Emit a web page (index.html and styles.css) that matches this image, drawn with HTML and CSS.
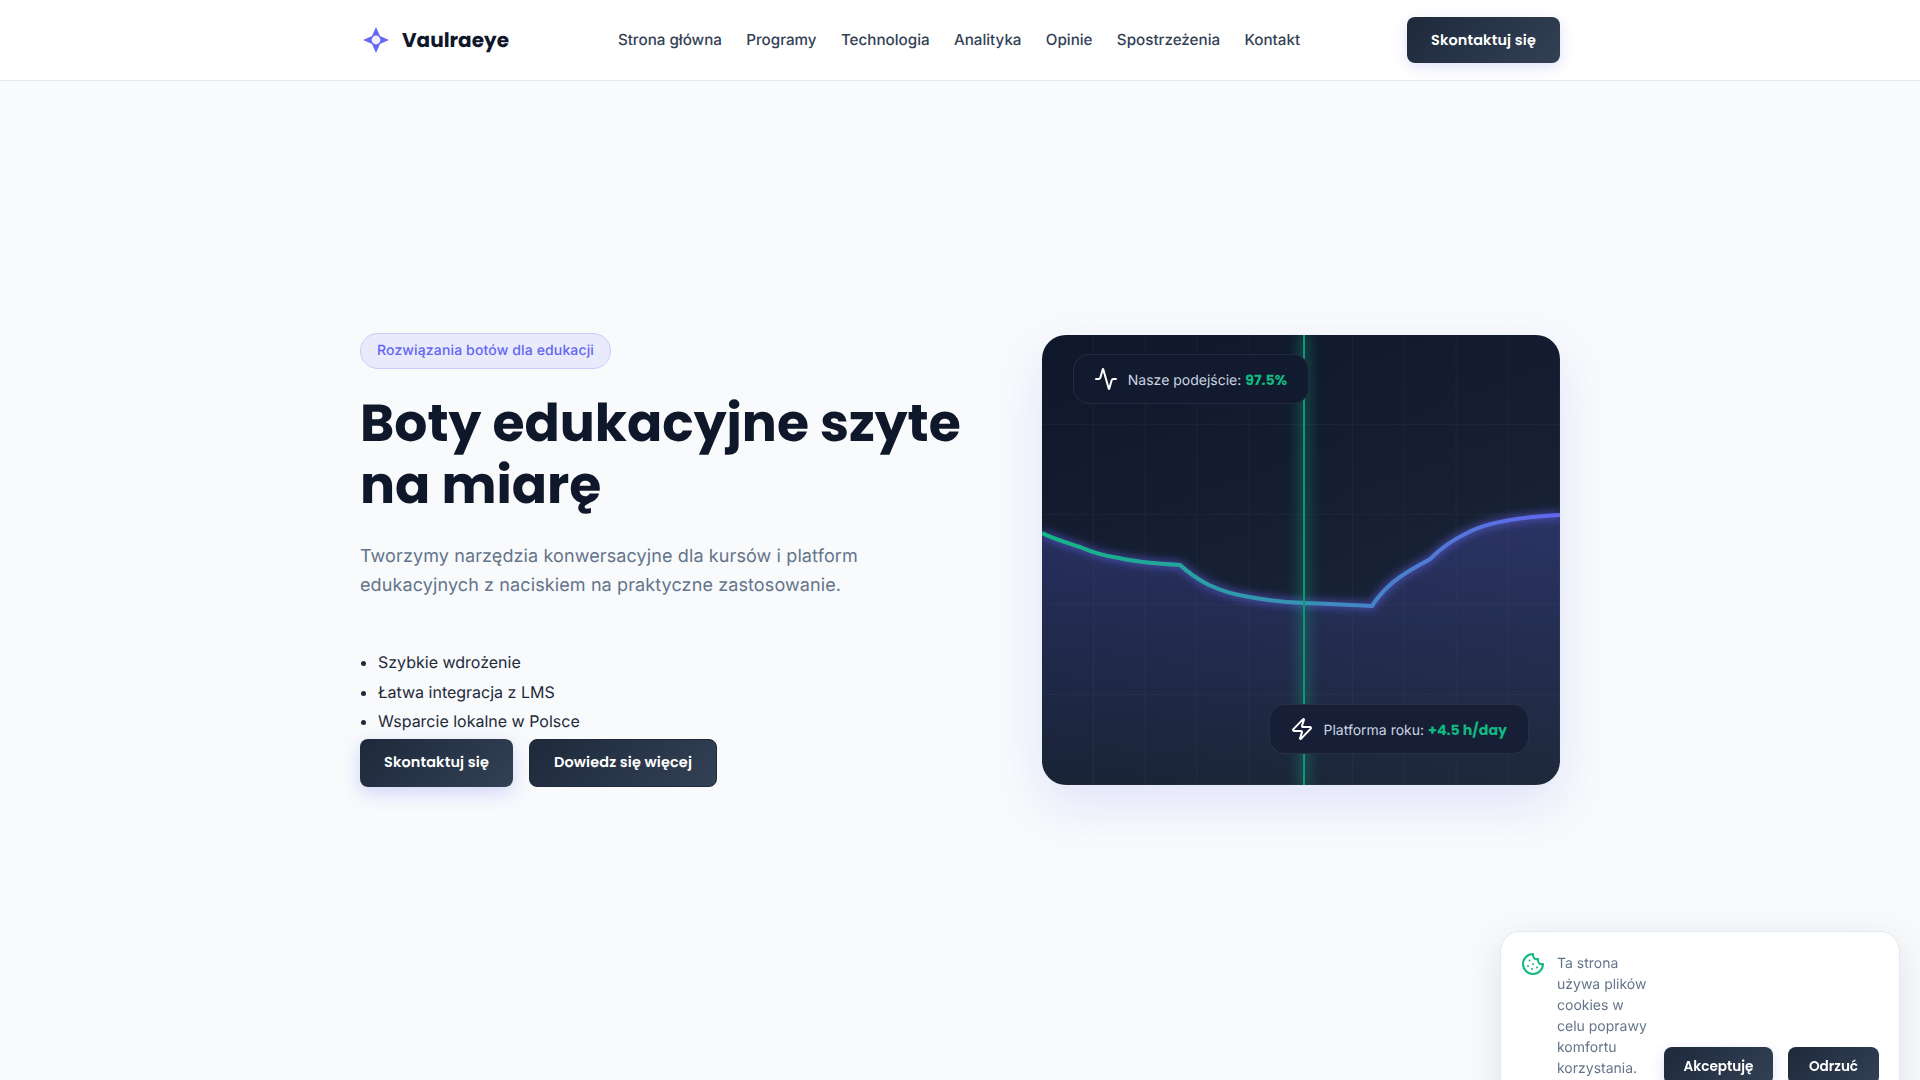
FILE: index.html
```html
<!DOCTYPE html>
<html lang="pl">
<head>
<meta charset="utf-8">
<title>Vaulraeye</title>
<link rel="stylesheet" href="styles.css">
</head>
<body>
<header class="site-header">
  <div class="container header-row">
    <a class="brand" href="#">
      <svg class="brand-mark" viewBox="0 0 28 28" aria-hidden="true">
        <path d="M14 1 L18 10 L27 14 L18 18 L14 27 L10 18 L1 14 L10 10 Z" fill="#6569f5"/>
        <circle cx="14" cy="14" r="4.4" fill="#eef0fb"/>
      </svg>
      <span class="brand-name">Vaulraeye</span>
    </a>
    <nav class="main-nav">
      <a href="#">Strona główna</a>
      <a href="#">Programy</a>
      <a href="#">Technologia</a>
      <a href="#">Analityka</a>
      <a href="#">Opinie</a>
      <a href="#">Spostrzeżenia</a>
      <a href="#">Kontakt</a>
    </nav>
    <a class="btn btn-header" href="#">Skontaktuj się</a>
  </div>
</header>

<main class="hero">
  <div class="container hero-grid">
    <section class="hero-copy">
      <span class="pill">Rozwiązania botów dla edukacji</span>
      <h1>Boty edukacyjne szyte na miarę</h1>
      <p class="lead">Tworzymy narzędzia konwersacyjne dla kursów i platform edukacyjnych z naciskiem na praktyczne zastosowanie.</p>
      <ul class="points">
        <li>Szybkie wdrożenie</li>
        <li>Łatwa integracja z LMS</li>
        <li>Wsparcie lokalne w Polsce</li>
      </ul>
      <div class="actions">
        <a class="btn btn-primary" href="#">Skontaktuj się</a>
        <a class="btn btn-secondary" href="#">Dowiedz się więcej</a>
      </div>
    </section>

    <figure class="viz">
      <svg class="viz-chart" viewBox="0 0 518 450" preserveAspectRatio="none" aria-hidden="true">
        <defs>
          <linearGradient id="areaFill" x1="0" y1="0" x2="0" y2="1">
            <stop offset="0" stop-color="#6366f1" stop-opacity="0.26"/>
            <stop offset="1" stop-color="#6366f1" stop-opacity="0"/>
          </linearGradient>
          <linearGradient id="lineStroke" x1="0" y1="0" x2="1" y2="0">
            <stop offset="0" stop-color="#10b981"/>
            <stop offset="1" stop-color="#6366f1"/>
          </linearGradient>
          <pattern id="gridCell" width="51.8" height="90" patternUnits="userSpaceOnUse">
            <path d="M51.8 0V90M0 90H51.8" fill="none" stroke="#ffffff" stroke-opacity="0.06" stroke-width="1"/>
          </pattern>
          <filter id="glow" x="-10%" y="-30%" width="120%" height="160%">
            <feGaussianBlur stdDeviation="4"/>
          </filter>
        </defs>
        <rect width="518" height="450" fill="url(#gridCell)"/>
        <path d="M0 198C12 204 26 208 38 212C52 218 62 221 77 223C95 227 120 229 138 230C150 241 157 245 167 250C180 256 190 259 202 261C222 265 240 267 262 268C285 269 310 270 330 271C338 258 346 252 350 248C360 239 375 231 388 224C398 214 412 204 425 198C445 187 480 182 518 180V450H0Z" fill="url(#areaFill)"/>
        <path d="M0 198C12 204 26 208 38 212C52 218 62 221 77 223C95 227 120 229 138 230C150 241 157 245 167 250C180 256 190 259 202 261C222 265 240 267 262 268C285 269 310 270 330 271C338 258 346 252 350 248C360 239 375 231 388 224C398 214 412 204 425 198C445 187 480 182 518 180" fill="none" stroke="#6366f1" stroke-opacity="0.8" stroke-width="5" filter="url(#glow)"/>
        <path d="M0 198C12 204 26 208 38 212C52 218 62 221 77 223C95 227 120 229 138 230C150 241 157 245 167 250C180 256 190 259 202 261C222 265 240 267 262 268C285 269 310 270 330 271C338 258 346 252 350 248C360 239 375 231 388 224C398 214 412 204 425 198C445 187 480 182 518 180" fill="none" stroke="url(#lineStroke)" stroke-width="4"/>
      </svg>
      <span class="scan-line"></span>
      <div class="stat stat-top">
        <svg class="stat-icon" viewBox="0 0 24 24" aria-hidden="true"><path d="M22 12h-2.48a2 2 0 0 0-1.93 1.46l-2.35 8.36a.25.25 0 0 1-.48 0L9.24 2.18a.25.25 0 0 0-.48 0l-2.35 8.36A2 2 0 0 1 4.49 12H2"/></svg>
        <span class="stat-label">Nasze podejście: <strong>97.5%</strong></span>
      </div>
      <div class="stat stat-bottom">
        <svg class="stat-icon" viewBox="0 0 24 24" aria-hidden="true"><path d="M4 14a1 1 0 0 1-.78-1.63l9.9-10.2a.5.5 0 0 1 .86.46l-1.92 6.02A1 1 0 0 0 13 10h7a1 1 0 0 1 .78 1.63l-9.9 10.2a.5.5 0 0 1-.86-.46l1.92-6.02A1 1 0 0 0 11 14z"/></svg>
        <span class="stat-label">Platforma roku: <strong>+4.5 h/day</strong></span>
      </div>
    </figure>
  </div>
</main>

<aside class="cookie">
  <svg class="cookie-icon" viewBox="0 0 24 24" aria-hidden="true">
    <path d="M12 2a10 10 0 1 0 10 10 4 4 0 0 1-5-5 4 4 0 0 1-5-5"/>
    <path d="M8.5 8.5v.01M16 15.5v.01M12 12v.01M11 17v.01M7 14v.01"/>
  </svg>
  <p class="cookie-text">Ta strona używa plików cookies w celu poprawy komfortu korzystania.</p>
  <div class="cookie-actions">
    <button class="btn btn-small btn-accept">Akceptuję</button>
    <button class="btn btn-small btn-reject">Odrzuć</button>
  </div>
</aside>
</body>
</html>
```
FILE: styles.css
```css
* { box-sizing: border-box; }
html, body { margin: 0; padding: 0; }
body {
  font-family: Inter, "Noto Sans", "Liberation Sans", sans-serif;
  background: #f8fafc;
  color: #0f172a;
  overflow-x: hidden;
  text-rendering: geometricPrecision;
}
a { text-decoration: none; color: inherit; }

.container { width: 1200px; margin: 0 auto; }

.site-header {
  height: 81px;
  background: #fff;
  border-bottom: 1px solid #e2e8f0;
}
.header-row {
  height: 80px;
  display: flex;
  align-items: center;
  justify-content: space-between;
}
.brand { display: flex; align-items: center; gap: 12px; margin-left: 2px; }
.brand-mark { width: 28px; height: 28px; display: block; }
.brand-name {
  font-family: Poppins, Inter, sans-serif;
  font-weight: 700;
  font-size: 20px;
  color: #0f172a;
}
.main-nav { display: flex; gap: 24.3px; padding-bottom: 2px; margin-left: 2px; }
.main-nav a { font-size: 15.2px; font-weight: 500; color: #334155; }

.btn {
  display: inline-flex;
  align-items: center;
  justify-content: center;
  padding-top: 2px;
  border-radius: 8px;
  font-family: Poppins, Inter, sans-serif;
  font-weight: 600;
  font-size: 14.4px;
  letter-spacing: .15px;
  color: #fff;
  background: linear-gradient(135deg, #1e293b, #334155);
  border: 0;
}
.btn-header { width: 153px; height: 46px; box-shadow: 0 4px 14px rgba(99, 102, 241, .2); }
.btn-primary { width: 153px; height: 48px; box-shadow: 0 6px 18px rgba(99, 102, 241, .25); }
.btn-secondary { width: 188px; height: 48px; border: 1px solid #1e293b; }

.hero {
  height: 958px;
  display: flex;
  align-items: center;
}
.hero-grid {
  display: grid;
  grid-template-columns: 1.2fr 1fr;
  gap: 60px;
  align-items: center;
}
.pill {
  display: block;
  width: fit-content;
  height: 36px;
  padding: 0 16px;
  line-height: 34px;
  border-radius: 18px;
  border: 1px solid #c9ccf8;
  background: #e9eafb;
  color: #6366f1;
  font-size: 14px;
  letter-spacing: .14px;
  font-weight: 500;
}
h1 {
  margin: 24px 0 25px;
  font-family: Poppins, Inter, sans-serif;
  font-weight: 700;
  font-size: 52px;
  line-height: 62.4px;
  color: #0f172a;
}
.lead {
  margin: 0 0 49.8px;
  max-width: 520px;
  font-size: 18px;
  letter-spacing: .11px;
  line-height: 28.8px;
  color: #64748b;
}
.points { margin: 0; padding: 0 0 0 18px; }
.points li { font-size: 16px; line-height: 24px; margin-bottom: 5.6px; color: #1e293b; }
.actions { display: flex; gap: 16px; }

.viz {
  position: relative;
  margin: 0;
  height: 450px;
  border-radius: 24px;
  overflow: hidden;
  background: linear-gradient(160deg, #0f172a, #1e293b);
  box-shadow: 0 20px 50px rgba(99, 102, 241, .15);
}
.viz-chart { display: block; width: 100%; height: 100%; }
.scan-line {
  position: absolute;
  top: 0;
  bottom: 0;
  left: 261px;
  width: 2px;
  background: #10977a;
  box-shadow: 0 0 14px 3px rgba(16, 185, 129, .45);
}
.stat {
  position: absolute;
  display: flex;
  align-items: center;
  gap: 10px;
  height: 50px;
  padding: 0 21px 0 20px;
  border-radius: 16px;
  border: 1px solid rgba(255, 255, 255, .08);
  background: #111a2e;
}
.stat-top { top: 19px; left: 31px; }
.stat-bottom { bottom: 31px; right: 31px; background: #171f36; }
.stat-icon {
  width: 24px;
  height: 24px;
  fill: none;
  stroke: #fff;
  stroke-width: 2;
  stroke-linecap: round;
  stroke-linejoin: round;
}
.stat-label { font-size: 14px; color: #cbd5e1; padding-top: 3px; }
.stat-label strong {
  font-family: Poppins, Inter, sans-serif;
  font-size: 14.2px;
  font-weight: 700;
  color: #10b981;
}

.cookie {
  position: fixed;
  top: 931px;
  right: 20px;
  width: 400px;
  display: flex;
  align-items: flex-start;
  gap: 12px;
  padding: 20px;
  background: #fff;
  border: 1px solid #e2e8f0;
  border-radius: 20px;
  box-shadow: 0 10px 40px rgba(15, 23, 42, .1);
}
.cookie-icon {
  flex: none;
  width: 24px;
  height: 24px;
  fill: none;
  stroke: #10b981;
  stroke-width: 2;
  stroke-linecap: round;
  stroke-linejoin: round;
}
.cookie-text {
  flex: none;
  margin: 1px 0 0;
  width: 95px;
  font-size: 14px;
  line-height: 21px;
  color: #64748b;
}
.cookie-actions { flex: none; display: flex; gap: 15px; margin-top: 95px; }
.btn-small { height: 38px; font-size: 13.6px; letter-spacing: 0; }
.btn-accept { width: 109px; box-shadow: 0 4px 14px rgba(99, 102, 241, .2); }
.btn-reject { width: 91px; }
```
